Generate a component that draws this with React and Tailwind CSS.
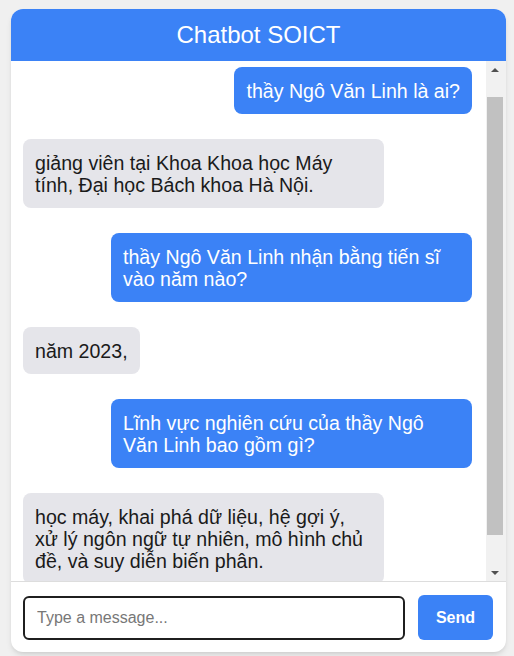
import { useEffect, useRef } from "react";

const messages = [
  { id: 1, from: "user", text: "thầy Ngô Văn Linh là ai?" },
  { id: 2, from: "bot", text: "giảng viên tại Khoa Khoa học Máy tính, Đại học Bách khoa Hà Nội." },
  { id: 3, from: "user", text: "thầy Ngô Văn Linh nhận bằng tiến sĩ vào năm nào?" },
  { id: 4, from: "bot", text: "năm 2023," },
  { id: 5, from: "user", text: "Lĩnh vực nghiên cứu của thầy Ngô Văn Linh bao gồm gì?" },
  {
    id: 6,
    from: "bot",
    text: "học máy, khai phá dữ liệu, hệ gợi ý, xử lý ngôn ngữ tự nhiên, mô hình chủ đề, và suy diễn biến phân.",
  },
];

const App = () => {
  const listRef = useRef(null);

  useEffect(() => {
    if (listRef.current) listRef.current.scrollTop = 23;
  }, []);

  return (
    <div className="min-h-screen bg-[#f0f0f0] pt-[9px] font-['Liberation_Sans',Arial,sans-serif]">
      <div className="ml-[11px] w-[495px] h-[643px] bg-white rounded-xl shadow-md overflow-hidden flex flex-col">
        <div className="h-[52px] bg-[#3b82f6] flex items-center justify-center">
          <h1 className="text-white text-[24px] leading-none">Chatbot SOICT</h1>
        </div>

        <div className="h-[520px] flex">
          <div
            ref={listRef}
            className="flex-1 overflow-y-scroll [scrollbar-width:none] flex flex-col gap-[25px] pl-3 pr-[14px] py-[29px]"
          >
            {messages.map((m) => (
              <div
                key={m.id}
                className={`flex ${m.from === "user" ? "justify-end" : "justify-start"}`}
              >
                <div
                  className={`max-w-[361px] px-3 py-[12.5px] rounded-lg text-[19.6px] leading-[22px] ${
                    m.from === "user" ? "bg-[#3b82f6] text-white" : "bg-[#e5e5ea] text-[#1a1a1a]"
                  }`}
                >
                  {m.text}
                </div>
              </div>
            ))}
          </div>

          {/* scrollbar look-alike */}
          <div className="w-[20px] bg-[#f1f1f1] flex flex-col items-start">
            <div className="w-[17px] h-[17px] flex items-center justify-center">
              <div className="w-0 h-0 border-l-[4px] border-r-[4px] border-b-[4px] border-l-transparent border-r-transparent border-b-[#505050]" />
            </div>
            <div className="ml-px mt-[19px] w-[16px] h-[438px] bg-[#c1c1c1]" />
            <div className="flex-1" />
            <div className="w-[17px] h-[17px] flex items-center justify-center">
              <div className="w-0 h-0 border-l-[4px] border-r-[4px] border-t-[4px] border-l-transparent border-r-transparent border-t-[#505050]" />
            </div>
          </div>
        </div>

        <div className="flex-1 border-t border-[#dddddd] flex items-start gap-[13px] px-3 pt-[14px]">
          <input
            type="text"
            placeholder="Type a message..."
            className="w-[382px] h-[44px] border-2 border-[#1f1f1f] rounded-md px-3 text-[16px] text-[#222] placeholder:text-[#777] outline-none"
          />
          <button className="w-[75px] h-[45px] -mt-px bg-[#3b82f6] text-white text-[16px] font-semibold rounded-md">
            Send
          </button>
        </div>
      </div>
    </div>
  );
};

export default App;
